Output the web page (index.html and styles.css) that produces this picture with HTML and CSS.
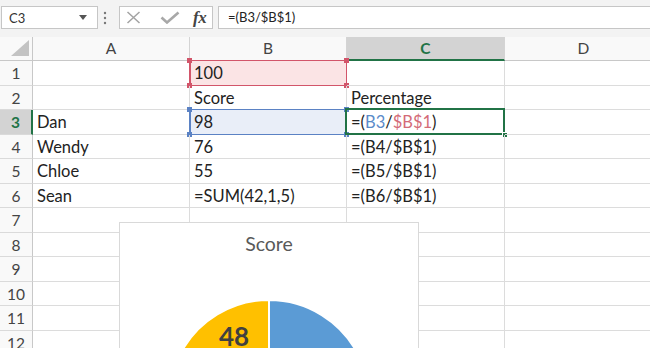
FILE: index.html
```html
<!DOCTYPE html>
<html>
<head>
<meta charset="utf-8">
<link rel="stylesheet" href="styles.css">
</head>
<body>
<div class="toolbar">
  <div class="namebox">
    <span class="nb-text">C3</span>
    <svg class="nb-arrow" width="8" height="5" viewBox="0 0 8 5"><path d="M0 0 H8 L4 5 Z" fill="#555"/></svg>
  </div>
  <div class="dots">
    <svg width="4" height="14" viewBox="0 0 4 14"><circle cx="2" cy="2" r="1.2" fill="#777"/><circle cx="2" cy="7" r="1.2" fill="#777"/><circle cx="2" cy="12" r="1.2" fill="#777"/></svg>
  </div>
  <div class="fbtns">
    <svg class="ic-x" width="15" height="13" viewBox="0 0 15 13"><path d="M1.5 1 L13.5 12 M13.5 1 L1.5 12" stroke="#a3a3a3" stroke-width="1.5" fill="none"/></svg>
    <svg class="ic-check" width="20" height="13" viewBox="0 0 20 13"><path d="M1.5 6.5 L7 11.5 L18.5 1.5" stroke="#a8a8a8" stroke-width="2.6" fill="none"/></svg>
    <span class="fx">fx</span>
  </div>
  <div class="formula">=(B3/$B$1)</div>
</div>

<div class="sheet-wrap">
<div class="sheet">
  <div class="corner"><svg width="20" height="17" viewBox="0 0 20 17"><path d="M19 0 V16 H1 Z" fill="#c3c3c3"/></svg></div>
  <div class="ch">A</div>
  <div class="ch">B</div>
  <div class="ch ch-active">C</div>
  <div class="ch">D</div>

  <div class="rh">1</div><div class="c"></div>
  <div class="c ref-red"><span>100</span><i class="h tl"></i><i class="h tr"></i><i class="h bl"></i><i class="h br"></i></div>
  <div class="c"></div><div class="c"></div>

  <div class="rh">2</div><div class="c"></div><div class="c">Score</div><div class="c">Percentage</div><div class="c"></div>

  <div class="rh rh-active">3</div><div class="c">Dan</div>
  <div class="c ref-blue"><span>98</span><i class="h tl"></i><i class="h tr"></i><i class="h bl"></i><i class="h br"></i></div>
  <div class="c sel">=(<span class="fb">B3</span>/<span class="fr">$B$1</span>)<i class="sel-box"></i><i class="sel-handle"></i></div>
  <div class="c"></div>

  <div class="rh">4</div><div class="c">Wendy</div><div class="c">76</div><div class="c">=(B4/$B$1)</div><div class="c"></div>
  <div class="rh">5</div><div class="c">Chloe</div><div class="c">55</div><div class="c">=(B5/$B$1)</div><div class="c"></div>
  <div class="rh">6</div><div class="c">Sean</div><div class="c">=SUM(42,1,5)</div><div class="c">=(B6/$B$1)</div><div class="c"></div>
  <div class="rh">7</div><div class="c"></div><div class="c"></div><div class="c"></div><div class="c"></div>
  <div class="rh">8</div><div class="c"></div><div class="c"></div><div class="c"></div><div class="c"></div>
  <div class="rh">9</div><div class="c"></div><div class="c"></div><div class="c"></div><div class="c"></div>
  <div class="rh">10</div><div class="c"></div><div class="c"></div><div class="c"></div><div class="c"></div>
  <div class="rh">11</div><div class="c"></div><div class="c"></div><div class="c"></div><div class="c"></div>
  <div class="rh">12</div><div class="c"></div><div class="c"></div><div class="c"></div><div class="c"></div>

  <div class="chart">
    <div class="chart-title">Score</div>
    <svg class="pie" width="300" height="300" viewBox="0 0 300 300">
      <g stroke="#fff" stroke-width="2">
        <path d="M150 178 L150 78 A100 100 0 0 1 229.45 238.73 Z" fill="#5b9bd5"/>
        <path d="M150 178 L229.45 238.73 A100 100 0 0 1 77.89 247.28 Z" fill="#ed7d31"/>
        <path d="M150 178 L77.89 247.28 A100 100 0 0 1 61.40 131.63 Z" fill="#a5a5a5"/>
        <path d="M150 178 L61.40 131.63 A100 100 0 0 1 150 78 Z" fill="#ffc000"/>
      </g>
      <text x="115" y="124" text-anchor="middle" class="pie-label">48</text>
    </svg>
  </div>
</div>
</div>
</body>
</html>
```

FILE: styles.css
```css
* { box-sizing: border-box; }
html, body { margin: 0; padding: 0; }
body {
  width: 650px;
  height: 348px;
  overflow: hidden;
  background: #fff;
  font-family: Lato, "Open Sans", sans-serif;
  color: #222;
}
.toolbar {
  height: 37px;
  background: #f3f3f3;
  display: flex;
  align-items: flex-start;
  padding-top: 6px;
  width: 663px;
}
.namebox {
  margin-left: 1px;
  width: 97px;
  height: 23px;
  background: #fff;
  border: 1px solid #c6c6c6;
  display: flex;
  align-items: center;
  padding-left: 7px;
  position: relative;
}
.nb-text { font-size: 13px; color: #333; }
.nb-arrow { position: absolute; left: 77px; top: 8px; }
.dots {
  width: 14px;
  height: 23px;
  margin-right: 7px;
  display: flex;
  align-items: center;
  justify-content: center;
}
.fbtns {
  width: 94px;
  height: 23px;
  background: #fff;
  border: 1px solid #c6c6c6;
  display: flex;
  align-items: center;
}
.ic-x { margin-left: 6px; }
.ic-check { margin-left: 19px; }
.fx {
  margin-left: 13px;
  font-family: "Liberation Serif", "DejaVu Serif", serif;
  font-style: italic;
  font-weight: bold;
  font-size: 17px;
  color: #444;
  line-height: 1;
  letter-spacing: -0.5px;
}
.formula {
  margin-left: 5px;
  flex: 1;
  height: 23px;
  background: #fff;
  border: 1px solid #c6c6c6;
  font-size: 13px;
  line-height: 21px;
  padding-left: 9px;
  color: #222;
}

.sheet-wrap {
  width: 650px;
  height: 311px;
  overflow: hidden;
}
.sheet {
  position: relative;
  width: 663px;
  display: grid;
  grid-template-columns: 33px 157px 157px 158px 158px;
  grid-template-rows: 24px repeat(12, 24.5px);
}
.corner {
  background: #f9f9f9;
  border-right: 1px solid #c8c8c8;
  border-bottom: 1px solid #c8c8c8;
  display: flex;
  align-items: flex-end;
  justify-content: flex-end;
  padding: 0 2px 3px 0;
}
.ch {
  background: #f9f9f9;
  border-right: 1px solid #d4d4d4;
  border-bottom: 1px solid #c8c8c8;
  text-align: center;
  font-size: 15.5px;
  line-height: 23px;
  color: #444;
}
.ch-active {
  background: #d3d3d3;
  color: #217346;
  font-weight: bold;
  border-bottom: 2px solid #217346;
}
.rh {
  background: #f9f9f9;
  border-right: 1px solid #c8c8c8;
  border-bottom: 1px solid #dadada;
  text-align: center;
  font-size: 15.5px;
  line-height: 24px;
  color: #444;
}
.rh-active {
  background: #d3d3d3;
  color: #217346;
  font-weight: bold;
  border-right: 2px solid #217346;
}
.c {
  position: relative;
  border-right: 1px solid #dcdcdc;
  border-bottom: 1px solid #dcdcdc;
  font-size: 16.5px;
  line-height: 24px;
  padding-left: 4px;
  color: #222;
  white-space: nowrap;
}
.ref-red {
  background: #fbe4e5;
}
.ref-red::before {
  content: "";
  position: absolute;
  left: -1px; top: -1px; right: -1px; bottom: -1px;
  border: 1.5px solid #d2556a;
  border-left-width: 2px;
}
.ref-red .h { background: #d2556a; }
.ref-blue {
  background: #e9eef8;
}
.ref-blue::before {
  content: "";
  position: absolute;
  left: -1px; top: -1px; right: -1px; bottom: -1px;
  border: 1.5px solid #5b82c4;
  border-left-width: 2px;
}
.ref-blue .h { background: #5b82c4; }
.c > span { position: relative; }
.h {
  position: absolute;
  width: 5px;
  height: 5px;
}
.h.tl { left: -3px; top: -3px; }
.h.tr { right: -3px; top: -3px; }
.h.bl { left: -3px; bottom: -3px; }
.h.br { right: -3px; bottom: -3px; }
.sel-box {
  position: absolute;
  left: -2px; top: -2px; right: -1px; bottom: -1px;
  border: 2px solid #217346;
}
.sel-handle {
  position: absolute;
  right: -4px;
  bottom: -4px;
  width: 6px;
  height: 6px;
  background: #217346;
  border: 1px solid #fff;
}
.fb { color: #5b8bc9; }
.fr { color: #d46b78; }

.chart {
  position: absolute;
  left: 119px;
  top: 185px;
  width: 300px;
  height: 200px;
  background: #fff;
  border: 1px solid #d9d9d9;
  z-index: 5;
}
.chart-title {
  text-align: center;
  font-size: 19.5px;
  color: #595959;
  margin-top: 9px;
  line-height: 24px;
}
.pie {
  position: absolute;
  left: -1px;
  top: -1px;
}
.pie-label {
  font-family: Lato, "Open Sans", sans-serif;
  font-weight: bold;
  font-size: 26px;
  fill: #404040;
}
```
